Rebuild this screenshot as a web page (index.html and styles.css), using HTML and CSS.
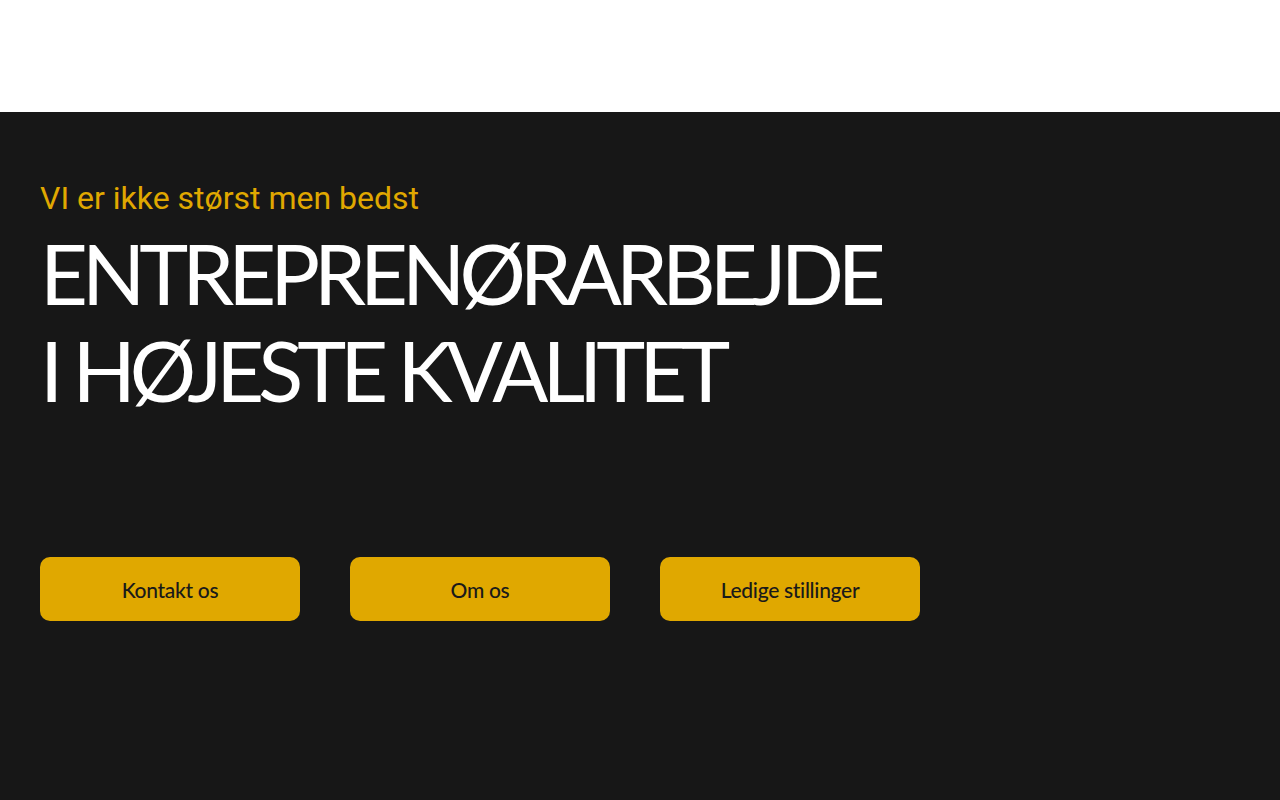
FILE: index.html
```html
<!DOCTYPE html>
<html lang="da">
<head>
<meta charset="utf-8">
<title>Entreprenørarbejde</title>
<link rel="stylesheet" href="styles.css">
</head>
<body>
<header class="topbar"></header>
<section class="hero">
  <p class="kicker">VI er ikke størst men bedst</p>
  <h1 class="title">ENTREPRENØRARBEJDE<br>I HØJESTE KVALITET</h1>
  <div class="actions">
    <a class="btn" href="#">Kontakt os</a>
    <a class="btn" href="#">Om os</a>
    <a class="btn" href="#">Ledige stillinger</a>
  </div>
</section>
</body>
</html>
```
FILE: styles.css
```css
html, body {
  margin: 0;
  padding: 0;
}
body {
  background: #171717;
  font-family: Lato, sans-serif;
}
.topbar {
  height: 112px;
  background: #ffffff;
}
.hero {
  height: 688px;
  box-sizing: border-box;
  padding: 64px 40px 0;
}
.kicker {
  margin: 0;
  font-family: Roboto, sans-serif;
  font-size: 32px;
  line-height: 44px;
  color: #e0a800;
}
.title {
  margin: 5px 0 0;
  font-family: Lato, sans-serif;
  font-weight: 400;
  font-size: 83px;
  line-height: 97px;
  color: #ffffff;
  letter-spacing: -6px;
}
.actions {
  display: flex;
  gap: 50px;
  margin-top: 138px;
}
.btn {
  width: 260px;
  height: 64px;
  display: flex;
  align-items: center;
  justify-content: center;
  background: #e0a800;
  border-radius: 10px;
  color: #1a1a1a;
  text-decoration: none;
  font-family: Lato, sans-serif;
  font-weight: 500;
  font-size: 21px;
  letter-spacing: -0.3px;
}
```
